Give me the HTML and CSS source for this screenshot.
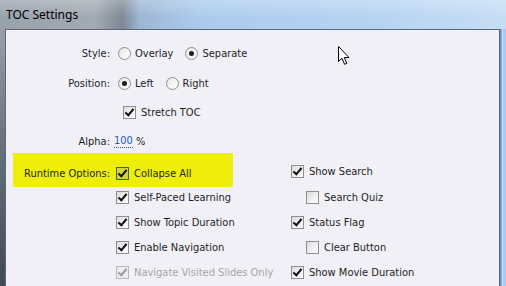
FILE: index.html
```html
<!DOCTYPE html>
<html lang="en">

<head>
    <meta charset="UTF-8">
    <title>TOC Settings</title>
    <link rel="stylesheet" href="styles.css">
</head>

<body>
    <div class="window">
        <div class="titlebar">TOC Settings</div>
        <div class="frame">
            <div class="panel">
                <div class="row row-style">
                    <span class="lbl">Style:</span>
                    <span class="opt"><span class="radio"></span>Overlay</span>
                    <span class="opt"><span class="radio on"></span>Separate</span>
                </div>
                <div class="row row-pos">
                    <span class="lbl">Position:</span>
                    <span class="opt"><span class="radio on"></span>Left</span>
                    <span class="opt"><span class="radio"></span>Right</span>
                </div>
                <div class="row row-stretch">
                    <span class="item"><span class="chk on"></span>Stretch TOC</span>
                </div>
                <div class="row row-alpha">
                    <span class="lbl">Alpha:</span>
                    <span class="alpha-val">100</span>&nbsp;%
                </div>

                <div class="runtime">
                    <div class="rt-row rt-first">
                        <div class="hl">
                            <span class="lbl">Runtime Options:</span>
                            <span class="item"><span class="chk on focus"></span>Collapse All</span>
                        </div>
                        <div class="col-b first"><span class="item"><span class="chk on"></span>Show Search</span></div>
                    </div>
                    <div class="rt-row">
                        <div class="col-a"><span class="item"><span class="chk on"></span>Self-Paced Learning</span></div>
                        <div class="col-b sub"><span class="item"><span class="chk"></span>Search Quiz</span></div>
                    </div>
                    <div class="rt-row">
                        <div class="col-a"><span class="item"><span class="chk on"></span>Show Topic Duration</span></div>
                        <div class="col-b"><span class="item"><span class="chk on"></span>Status Flag</span></div>
                    </div>
                    <div class="rt-row">
                        <div class="col-a"><span class="item"><span class="chk on"></span>Enable Navigation</span></div>
                        <div class="col-b sub"><span class="item"><span class="chk"></span>Clear Button</span></div>
                    </div>
                    <div class="rt-row">
                        <div class="col-a"><span class="item disabled"><span class="chk on"></span>Navigate Visited Slides Only</span></div>
                        <div class="col-b"><span class="item"><span class="chk on"></span>Show Movie Duration</span></div>
                    </div>
                </div>
            </div>
        </div>

        <svg class="cursor" width="13" height="20" viewBox="0 0 13 20">
            <path d="M0.5 0.5 L0.5 15.5 L4 12.2 L6.6 18.3 L8.8 17.4 L6.3 11.5 L11 11.5 Z" fill="#fff" stroke="#000" stroke-width="1" stroke-linejoin="miter"/>
        </svg>
    </div>
</body>

</html>
```

FILE: styles.css
```css
body {
    margin: 0;
    font-family: "DejaVu Sans Condensed", "DejaVu Sans", sans-serif;
    font-size: 11px;
    color: #1e1e1e;
    overflow: hidden;
}

.window {
    position: relative;
    width: 506px;
    height: 286px;
    display: flex;
    flex-direction: column;
    overflow: hidden;
}

.titlebar {
    height: 29px;
    box-sizing: border-box;
    padding: 6px 0 0 6px;
    font-family: "Noto Sans", sans-serif;
    font-size: 12px;
    color: #000;
    background:
        linear-gradient(rgba(255, 255, 255, 0.25), rgba(255, 255, 255, 0) 60%),
        linear-gradient(90deg, #98a2ac 0, #a2aab2 95px, #7e8894 122px, #9cb6d4 140px, #abcbee 200px, #b6d4f2 380px, #c6ddf5 506px);
}

.frame {
    flex: 1;
    display: flex;
    padding: 0 6px 0 5px;
    background:
        linear-gradient(#98a1aa, #6b7682 40%, #3d4a57) left top / 5px 100% no-repeat,
        linear-gradient(90deg, #5e8fce 0, #5e8fce 1px, #bcd6f1 2px, #a8c8ec 6px) right top / 6px 100% no-repeat;
}

.panel {
    flex: 1;
    background: #f0f0f6;
    border: 1px solid #5d6976;
    border-bottom: none;
    padding-top: 13px;
}

.row {
    display: flex;
    align-items: center;
    height: 20px;
}

.row-style {
    margin-bottom: 10px;
}

.row-pos,
.row-stretch {
    margin-bottom: 9px;
}

.row-stretch {
    padding-left: 117px;
}

.lbl {
    width: 104px;
    text-align: right;
    flex-shrink: 0;
}

.opt {
    display: inline-flex;
    align-items: center;
    margin-left: 8px;
    margin-right: 4px;
}

.radio {
    width: 11px;
    height: 11px;
    border: 1px solid #8d8f92;
    border-radius: 50%;
    background: linear-gradient(135deg, #e6e6e6, #ffffff);
    margin-right: 4px;
    position: relative;
}

.radio.on::after {
    content: "";
    position: absolute;
    left: 3px;
    top: 3px;
    width: 5px;
    height: 5px;
    border-radius: 50%;
    background: #1c1c1c;
}

.alpha-val {
    margin-left: 4px;
    color: #1f5fb8;
    border-bottom: 1px dotted #1f5fb8;
    line-height: 12px;
}

.item {
    display: inline-flex;
    align-items: center;
    white-space: nowrap;
}

.chk {
    width: 11px;
    height: 11px;
    border: 1px solid #8e8f93;
    background: linear-gradient(135deg, #dcdcdc, #ffffff);
    margin-right: 5px;
    position: relative;
    flex-shrink: 0;
}

.chk.on::after {
    content: "";
    position: absolute;
    left: 3px;
    top: 0;
    width: 3px;
    height: 7px;
    border-right: 2px solid #111;
    border-bottom: 2px solid #111;
    transform: rotate(40deg);
}

.chk.focus {
    border-color: #3a6a1a;
    background: #d2d43a;
}

.item.disabled {
    color: #a6a6a6;
}

.item.disabled .chk {
    border-color: #b8b8b8;
    background: #ececec;
}

.item.disabled .chk::after {
    border-color: #9a9a9a;
}

.runtime {
    margin-top: 2px;
}

.rt-row {
    display: flex;
    align-items: center;
    height: 25px;
}

.rt-first {
    height: 34px;
    margin-bottom: -1px;
}

.hl {
    display: flex;
    align-items: center;
    align-self: stretch;
    box-sizing: border-box;
    width: 220px;
    margin-left: 7px;
    padding-top: 6px;
    background: #eeee0a;
}

.hl .lbl {
    width: 97px;
    margin-right: 6px;
}

.col-a {
    width: 175px;
    padding-left: 110px;
    flex-shrink: 0;
}

.col-b.first {
    margin-left: 58px;
    padding-top: 6px;
}

.col-b.sub {
    padding-left: 15px;
}

.cursor {
    position: absolute;
    left: 338px;
    top: 46px;
}
```
